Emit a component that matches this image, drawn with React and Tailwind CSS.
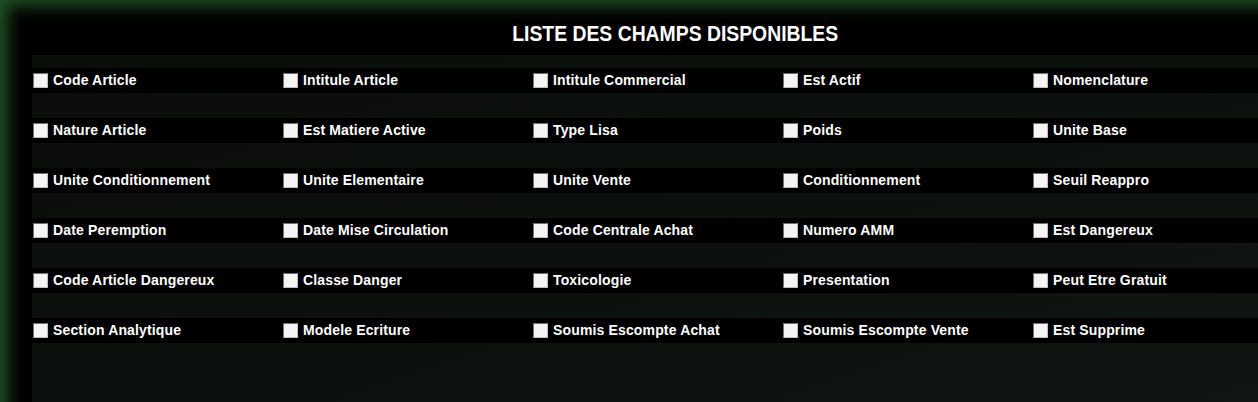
import React from 'react';

const fields = [
  'Code Article', 'Intitule Article', 'Intitule Commercial', 'Est Actif', 'Nomenclature',
  'Nature Article', 'Est Matiere Active', 'Type Lisa', 'Poids', 'Unite Base',
  'Unite Conditionnement', 'Unite Elementaire', 'Unite Vente', 'Conditionnement', 'Seuil Reappro',
  'Date Peremption', 'Date Mise Circulation', 'Code Centrale Achat', 'Numero AMM', 'Est Dangereux',
  'Code Article Dangereux', 'Classe Danger', 'Toxicologie', 'Presentation', 'Peut Etre Gratuit',
  'Section Analytique', 'Modele Ecriture', 'Soumis Escompte Achat', 'Soumis Escompte Vente', 'Est Supprime',
];

const rows = [];
for (let i = 0; i < fields.length; i += 5) rows.push(fields.slice(i, i + 5));

const App = () => {
  return (
    <div className="w-[1258px] h-[402px] overflow-hidden bg-black shadow-[inset_14px_12px_16px_-6px_rgba(34,90,40,0.9)] pl-[32px] pt-[12px]">
      {/* Title */}
      <div className="h-[43px] flex items-center justify-center pl-[60px]">
        <h2 className="text-white font-bold text-[22px] scale-x-[0.88] [font-family:'Liberation_Sans',Arial,sans-serif]">
          LISTE DES CHAMPS DISPONIBLES
        </h2>
      </div>

      {/* Field list */}
      <div className="h-[400px] pt-[13px] bg-gradient-to-br from-[#0b0e0b] via-[#0d110e] to-[#111612]">
        {rows.map((row, r) => (
          <div key={r} className="h-[50px]">
            <div className="h-[25px] bg-black grid grid-cols-[250px_250px_250px_250px_250px] items-center">
              {row.map((name) => (
                <label key={name} className="flex items-center gap-[5px] pl-[1px]">
                  <span className="w-[15px] h-[15px] bg-[#f4f4f4] border border-t-[#6f6f6f] border-l-[#6f6f6f] border-b-[#bdbdbd] border-r-[#bdbdbd]" />
                  <span className="text-white font-bold text-[14px] tracking-[0.15px] [font-family:'Liberation_Sans',Arial,sans-serif]">
                    {name}
                  </span>
                </label>
              ))}
            </div>
          </div>
        ))}
      </div>
    </div>
  );
};

export default App;
